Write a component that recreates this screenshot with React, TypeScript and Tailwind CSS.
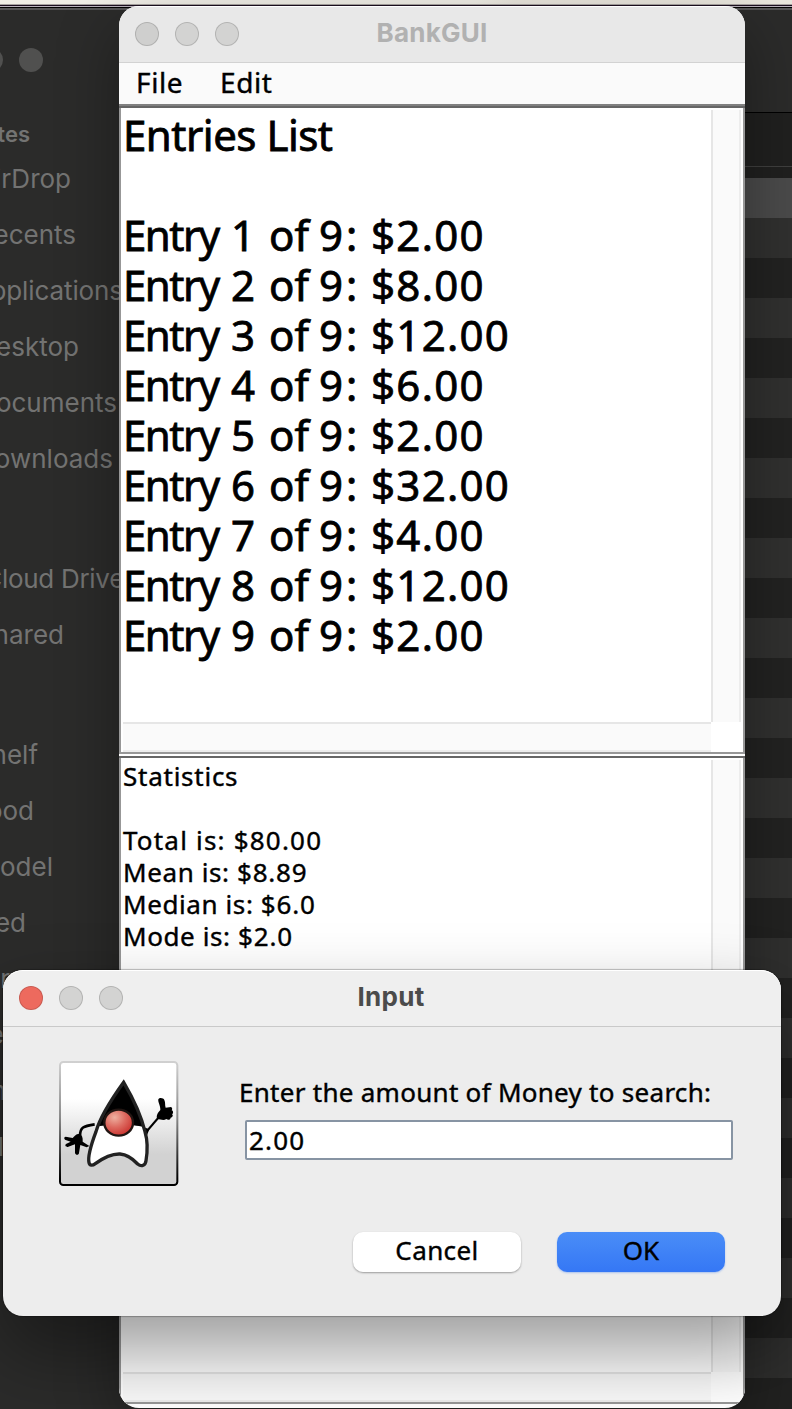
import type { ReactNode } from "react";

const entries = ["2.00", "8.00", "12.00", "6.00", "2.00", "32.00", "4.00", "12.00", "2.00"];

const stripes = Array.from({ length: 30 }, (_, i) => i);

function SideItem({ label, end, gap = "" }: { label: string; end: string; gap?: string }) {
  return (
    <div className={`flex h-14 items-center justify-end whitespace-nowrap ${end} ${gap}`}>
      <span>{label}</span>
    </div>
  );
}

function Finder() {
  return (
    <div className="absolute inset-x-0 top-0 flex h-[1409px] flex-col bg-[#2b2b2a]">
      <div className="h-1 shrink-0 bg-gradient-to-r from-[#f0eee6] from-60% to-[#e9e6dd] to-65%" />
      <div className="h-px shrink-0 bg-[#a7a2a0]" />
      <div className="h-px shrink-0 bg-[#1c1020]" />
      <div className="h-px shrink-0 bg-[#b9b2bb]" />
      <div className="h-px shrink-0 bg-black" />
      <div className="h-[2px] shrink-0 bg-[#565556]" />
      <div className="flex grow">
        <div className="flex w-[140px] flex-col overflow-hidden font-[Inter] text-[26px] text-[#737372]">
          <div className="mt-[38px] flex h-6 gap-4">
            <div className="-ml-[21px] size-6 rounded-full bg-[#50504f]" />
            <div className="size-6 rounded-full bg-[#50504f]" />
          </div>
          <div className="mt-[46px] flex h-8 w-[30px] items-center justify-end text-[22px] font-semibold">tes</div>
          <SideItem label="irDrop" end="w-[71px]" />
          <SideItem label="ecents" end="w-[76px]" />
          <SideItem label="pplications" end="w-[123px] tracking-[-0.1px]" />
          <SideItem label="esktop" end="w-[79px]" />
          <SideItem label="ocuments" end="w-[117px]" />
          <SideItem label="ownloads" end="w-[113px]" />
          <SideItem label="Cloud Drive" end="w-[124px] tracking-[-0.3px]" gap="mt-16" />
          <SideItem label="hared" end="w-[64px]" />
          <SideItem label="helf" end="w-[38px]" gap="mt-16" />
          <SideItem label="ood" end="w-[34px]" />
          <SideItem label="odel" end="w-[53px]" />
          <SideItem label="ed" end="w-[26px]" />
          <SideItem label="r" end="w-[10px]" />
          <SideItem label="e" end="w-[4px]" />
          <SideItem label="n" end="w-[6px]" />
          <SideItem label="l" end="w-[4px]" />
        </div>
        <div className="ml-auto flex w-[60px] flex-col">
          <div className="h-[102px] shrink-0" />
          <div className="h-px shrink-0 bg-black" />
          <div className="h-[53px] shrink-0 bg-[#20201f]" />
          <div className="h-px shrink-0 bg-[#3f3f3e]" />
          <div className="h-[11px] shrink-0 bg-[#20201f]" />
          <div className="h-10 shrink-0 bg-[#4a4a4a]" />
          {stripes.map((i) => (
            <div key={i} className={`h-10 shrink-0 ${i % 2 ? "bg-[#222221]" : "bg-[#30302f]"}`} />
          ))}
        </div>
      </div>
    </div>
  );
}

function Dots({ first = "bg-[#cfcfce]" }: { first?: string }) {
  return (
    <div className="flex gap-4 pb-[2px]">
      <div className={`size-6 rounded-full border border-black/15 ${first}`} />
      <div className="size-6 rounded-full border border-black/15 bg-[#d3d3d2]" />
      <div className="size-6 rounded-full border border-black/15 bg-[#d3d3d2]" />
    </div>
  );
}

function ScrollPane({ children, className }: { children: ReactNode; className: string }) {
  return (
    <div className={`flex flex-col border-x-2 border-b-2 border-[#979797] bg-white ${className}`}>
      <div className="flex min-h-0 grow">
        <div className="grow">{children}</div>
        <div className="mt-[2px] mr-[2px] w-[30px] shrink-0 border-x-2 border-l-[#e6e6e6] border-r-[#ededed] bg-[#fafafa]" />
      </div>
      <div className="mr-8 ml-[2px] h-[30px] shrink-0 border-y-2 border-t-[#e6e6e6] border-b-[#ededed] bg-[#fafafa]" />
    </div>
  );
}

function Stat({ label, value, wide = false }: { label: string; value: string; wide?: boolean }) {
  return (
    <div className={wide ? "tracking-[1.2px]" : "tracking-[0.6px]"}>
      {label} is: <span className={wide ? "tracking-[1.2px]" : "tracking-[0.8px]"}>{value}</span>
    </div>
  );
}

function BankWindow() {
  return (
    <div className="absolute top-[6px] left-[119px] flex h-[1402px] w-[626px] flex-col overflow-hidden rounded-[20px] bg-white font-['Noto_Sans',sans-serif] text-black">
      <div className="relative flex h-[57px] shrink-0 items-center border-t border-b border-t-white border-b-[#d2d2d2] bg-[#e8e8e8] pl-4">
        <Dots />
        <div className="absolute inset-x-0 top-[10px] text-center font-[Inter] text-[26px] leading-8 font-bold tracking-[0.2px] text-[#b1b1b1]">BankGUI</div>
      </div>
      <div className="flex h-[41px] shrink-0 items-center bg-[#fafafa] pb-[3px] pl-[17px] text-[28px] leading-8 tracking-[0.6px] [-webkit-text-stroke:0.4px_#000]">
        <span className="w-[84px]">File</span>
        <span>Edit</span>
      </div>
      <div className="h-[2px] shrink-0 bg-[#808080]" />
      <div className="h-[2px] shrink-0 bg-[#666]" />
      <ScrollPane className="h-[646px] shrink-0">
        <div className="pt-[2px] pl-[2px] text-[42px] leading-[50px] whitespace-nowrap [-webkit-text-stroke:0.8px_#000]">
          <div className="tracking-[-0.5px]">Entries List</div>
          <div className="h-[50px]" />
          {entries.map((v, i) => (
            <div key={i} className="grid grid-cols-[108px_38px_50px_52px_auto]">
              <span className="tracking-[-1.5px]">Entry</span>
              <span>{i + 1}</span>
              <span>of</span>
              <span className="tracking-[3px]">9:</span>
              <span className="tracking-[1.3px]">${v}</span>
            </div>
          ))}
        </div>
      </ScrollPane>
      <div className="h-[2px] shrink-0 bg-white" />
      <div className="h-[2px] shrink-0 bg-[#666]" />
      <ScrollPane className="h-[646px] shrink-0">
        <div className="pt-[2px] pl-[2px] text-[26px] leading-8 whitespace-nowrap [-webkit-text-stroke:0.4px_#000]">
          <div className="tracking-[0.75px]">Statistics</div>
          <div className="h-8" />
          <Stat label="Total" value="$80.00" wide />
          <Stat label="Mean" value="$8.89" />
          <Stat label="Median" value="$6.0" />
          <Stat label="Mode" value="$2.0" />
        </div>
      </ScrollPane>
    </div>
  );
}

function Duke() {
  return (
    <svg className="h-[126px] w-[121px]" viewBox="24 30 363 378">
      <defs>
        <linearGradient id="tile" x1="0" y1="0" x2="0" y2="1">
          <stop offset="0.3" stopColor="#fff" />
          <stop offset="0.75" stopColor="#d2d2d2" />
          <stop offset="1" stopColor="#d2d2d2" />
        </linearGradient>
        <linearGradient id="edge" x1="0" y1="0" x2="0" y2="1">
          <stop offset="0" stopColor="#d0d0d0" />
          <stop offset="0.45" stopColor="#8a8a8a" />
          <stop offset="0.95" stopColor="#000" />
        </linearGradient>
        <radialGradient id="nose" cx="0.36" cy="0.3" r="0.75">
          <stop offset="0" stopColor="#eeb0a0" />
          <stop offset="0.5" stopColor="#dd6a60" />
          <stop offset="1" stopColor="#c9302c" />
        </radialGradient>
      </defs>
      <rect x="30" y="36" width="352" height="369" rx="10" fill="url(#tile)" stroke="url(#edge)" strokeWidth="6" />
      <path d="M90 258 C90 232 100 228 134 223" fill="none" stroke="#000" strokeWidth="8" />
      <path d="M118 288 L98 275 C99 262 96 255 88 252 C80 250 75 257 68 264 L47 260 C41 261 42 268 47 270 L62 275 L48 282 C43 287 49 293 55 290 L75 283 L75 309 C77 317 87 315 87 309 L91 285 L110 292 Z" fill="#000" />
      <path d="M291 243 L327 201" fill="none" stroke="#000" strokeWidth="6" />
      <path d="M322 207 C317 198 324 187 331 180 C332 168 323 156 325 148 C328 142 340 143 343 150 C347 158 344 166 347 173 L363 171 C368 173 367 179 365 181 C371 183 370 191 366 193 C371 196 367 203 362 203 C362 209 354 211 349 207 C340 213 331 207 322 207 Z" fill="#000" />
      <path d="M280 231 L298 238 L291 256 L283 250 Z" fill="#000" />
      <path d="M221 97 C185 147 151 199 138 245 C123 285 113 321 117 338 C119 348 128 347 136 341 C162 322 187 311 210 312 C235 314 250 328 263 342 C275 352 286 346 288 332 C293 302 294 275 285 245 C275 203 248 143 221 97 Z" fill="#fff" />
      <path d="M221 97 C185 147 153 199 142 229 C184 222 250 222 281 231 C270 190 246 140 221 97 Z" fill="#000" />
      <path d="M221 97 C185 147 151 199 138 245 C123 285 113 321 117 338 C119 348 128 347 136 341 C162 322 187 311 210 312 C235 314 250 328 263 342 C275 352 286 346 288 332 C293 302 294 275 285 245 C275 203 248 143 221 97 Z" fill="none" stroke="#222" strokeWidth="10" />
      <ellipse cx="206" cy="218" rx="43" ry="39" fill="url(#nose)" stroke="#211512" strokeWidth="7" />
    </svg>
  );
}

function InputDialog() {
  return (
    <div className="absolute top-[970px] left-[3px] flex h-[346px] w-[778px] flex-col rounded-[20px] bg-[#ededed] font-['Noto_Sans',sans-serif] text-[26px] leading-8 text-black shadow-[0_0_1px_1px_rgba(0,0,0,0.25),0_35px_75px_rgba(0,0,0,0.4)]">
      <div className="relative flex h-[57px] shrink-0 items-center rounded-t-[20px] border-t border-b border-t-white border-b-[#c9c9c9] bg-[#efefef] pl-4">
        <Dots first="bg-[#ed6a5e]" />
        <div className="absolute inset-x-0 top-[10px] pr-[2px] text-center font-[Inter] text-[26px] leading-8 font-bold tracking-[0.3px] text-[#4b4b4b]">Input</div>
      </div>
      <div className="flex pt-[33px] pl-[55px] [-webkit-text-stroke:0.4px_#000]">
        <Duke />
        <div className="ml-[59px] pt-4">
          <div className="pl-px tracking-[0.28px] whitespace-nowrap">Enter the amount of Money to search:</div>
          <div className="mt-3 ml-[7px] flex h-10 w-[488px] items-center rounded-[2px] border-2 border-[#8794a3] bg-white pl-[2px] tracking-[1.2px]">2.00</div>
        </div>
      </div>
      <div className="mt-[46px] flex justify-end gap-9 pr-14 [-webkit-text-stroke:0.4px_#000]">
        <div className="flex h-10 w-[168px] items-center justify-center rounded-[10px] bg-white pb-[5px] tracking-[0.4px] shadow-[0_1px_2px_rgba(0,0,0,0.35)]">Cancel</div>
        <div className="flex h-10 w-[168px] items-center justify-center rounded-[10px] bg-gradient-to-b from-[#4a8df7] to-[#3577f5] pb-[5px] shadow-[0_1px_2px_rgba(70,130,240,0.4)]">OK</div>
      </div>
    </div>
  );
}

export default function App() {
  return (
    <div className="relative h-[1409px] w-[792px] overflow-hidden bg-black">
      <Finder />
      <div className="absolute top-[10px] left-[119px] h-[1397px] w-[626px] rounded-[20px] shadow-[0_20px_60px_rgba(0,0,0,0.35)]" />
      <BankWindow />
      <InputDialog />
    </div>
  );
}
